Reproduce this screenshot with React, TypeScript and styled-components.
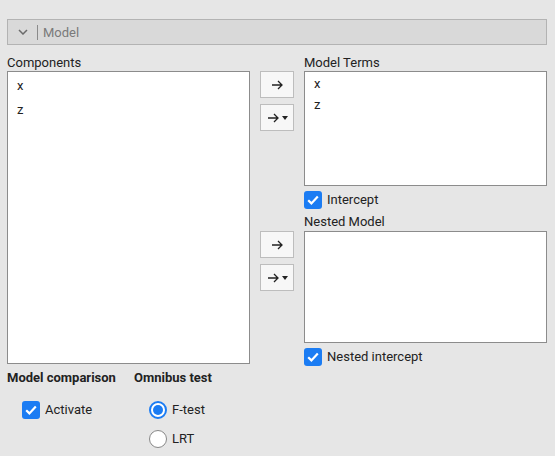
import styled, { createGlobalStyle } from "styled-components";

const GlobalStyle = createGlobalStyle`
  html, body {
    margin: 0;
    padding: 0;
    background: #e6e6e6;
  }
  body {
    font-family: Roboto, "Liberation Sans", sans-serif;
    font-size: 13px;
    color: #222;
  }
`;

const Page = styled.div`
  width: 555px;
  height: 456px;
  box-sizing: border-box;
  padding: 19px 8px 0 7px;
  overflow: hidden;
`;

const Header = styled.div`
  height: 26px;
  box-sizing: border-box;
  border: 1px solid #b3b3b3;
  background: #d9d9d9;
  display: flex;
  align-items: center;
  padding-left: 10px;
  color: #7a7a7a;
`;

const Divider = styled.span`
  width: 1px;
  height: 15px;
  background: #8a8a8a;
  margin: 0 5px 0 9px;
`;

const Body = styled.div`
  display: grid;
  grid-template-columns: 243px 34px 243px;
  column-gap: 10px;
  margin-top: 9px;
`;

const Column = styled.div`
  display: flex;
  flex-direction: column;
`;

const Label = styled.div<{ $height?: number }>`
  height: ${(p) => p.$height ?? 17}px;
  line-height: 17px;
`;

const ListBox = styled.div<{ $height: number; $gap: number; $top: number }>`
  height: ${(p) => p.$height}px;
  box-sizing: border-box;
  border: 1px solid #8c8c8c;
  background: #fff;
  padding: ${(p) => p.$top}px 0 0 9px;
  display: flex;
  flex-direction: column;
  gap: ${(p) => p.$gap}px;
`;

const Item = styled.div`
  line-height: 17px;
`;

const ButtonColumn = styled.div`
  display: flex;
  flex-direction: column;
  padding-top: 17px;
`;

const ButtonGroup = styled.div<{ $offset: number }>`
  display: flex;
  flex-direction: column;
  gap: 6px;
  margin-top: ${(p) => p.$offset}px;
`;

const ArrowButton = styled.div`
  width: 34px;
  height: 27px;
  box-sizing: border-box;
  border: 1px solid #bdbdbd;
  background: #f7f7f7;
  display: flex;
  align-items: center;
  justify-content: center;
  gap: 2px;
`;

const CheckRow = styled.label<{ $last?: boolean }>`
  display: flex;
  align-items: center;
  gap: 5px;
  height: 19px;
  margin: 4px 0 ${(p) => (p.$last ? 0 : 4)}px 0;
`;

const CheckBox = styled.span`
  width: 18px;
  height: 18px;
  border-radius: 3px;
  background: #1b7cf3;
  display: flex;
  align-items: center;
  justify-content: center;
`;

const Radio = styled.span<{ $on: boolean }>`
  width: 18px;
  height: 18px;
  box-sizing: border-box;
  border-radius: 50%;
  background: #fff;
  border: ${(p) => (p.$on ? "2px solid #1b7cf3" : "1px solid #888")};
  display: flex;
  align-items: center;
  justify-content: center;
  &::after {
    content: "";
    display: ${(p) => (p.$on ? "block" : "none")};
    width: 10px;
    height: 10px;
    border-radius: 50%;
    background: #1b7cf3;
  }
`;

const Options = styled.div`
  display: flex;
  margin-top: 3px;
`;

const OptionGroup = styled.div<{ $width: number }>`
  width: ${(p) => p.$width}px;
  display: flex;
  flex-direction: column;
`;

const GroupTitle = styled.div`
  font-weight: bold;
  height: 17px;
  line-height: 17px;
  margin-bottom: 14px;
`;

const RadioList = styled.div`
  display: flex;
  flex-direction: column;
  gap: 10px;
  margin-left: 15px;
  & > label {
    margin: 0;
  }
`;

const Arrow = () => (
  <svg width="13" height="10" viewBox="0 0 13 10">
    <path d="M1 5h10M7 1l4 4-4 4" fill="none" stroke="#222" strokeWidth="1.3" />
  </svg>
);

const Caret = () => (
  <svg width="6" height="4" viewBox="0 0 6 4">
    <path d="M0 0h6L3 4z" fill="#222" />
  </svg>
);

const Check = () => (
  <svg width="12" height="10" viewBox="0 0 12 10">
    <path d="M1.2 5.2l3.2 3.2L10.8 1.5" fill="none" stroke="#fff" strokeWidth="2.2" />
  </svg>
);

const Chevron = () => (
  <svg width="10" height="6" viewBox="0 0 10 6">
    <path d="M1 1l4 4 4-4" fill="none" stroke="#6b6b6b" strokeWidth="1.5" />
  </svg>
);

const Buttons = ({ offset }: { offset: number }) => (
  <ButtonGroup $offset={offset}>
    <ArrowButton>
      <Arrow />
    </ArrowButton>
    <ArrowButton>
      <Arrow />
      <Caret />
    </ArrowButton>
  </ButtonGroup>
);

export default function App() {
  return (
    <Page>
      <GlobalStyle />
      <Header>
        <Chevron />
        <Divider />
        Model
      </Header>
      <Body>
        <Column>
          <Label>Components</Label>
          <ListBox $height={293} $gap={7} $top={5}>
            <Item>x</Item>
            <Item>z</Item>
          </ListBox>
        </Column>
        <ButtonColumn>
          <Buttons offset={0} />
          <Buttons offset={100} />
        </ButtonColumn>
        <Column>
          <Label>Model Terms</Label>
          <ListBox $height={115} $gap={4} $top={3}>
            <Item>x</Item>
            <Item>z</Item>
          </ListBox>
          <CheckRow>
            <CheckBox>
              <Check />
            </CheckBox>
            Intercept
          </CheckRow>
          <Label $height={18}>Nested Model</Label>
          <ListBox $height={112} $gap={4} $top={3} />
          <CheckRow $last>
            <CheckBox>
              <Check />
            </CheckBox>
            Nested intercept
          </CheckRow>
        </Column>
      </Body>
      <Options>
        <OptionGroup $width={127}>
          <GroupTitle>Model comparison</GroupTitle>
          <RadioList>
            <CheckRow>
              <CheckBox>
                <Check />
              </CheckBox>
              Activate
            </CheckRow>
          </RadioList>
        </OptionGroup>
        <OptionGroup $width={150}>
          <GroupTitle>Omnibus test</GroupTitle>
          <RadioList>
            <CheckRow>
              <Radio $on />
              F-test
            </CheckRow>
            <CheckRow>
              <Radio $on={false} />
              LRT
            </CheckRow>
          </RadioList>
        </OptionGroup>
      </Options>
    </Page>
  );
}
